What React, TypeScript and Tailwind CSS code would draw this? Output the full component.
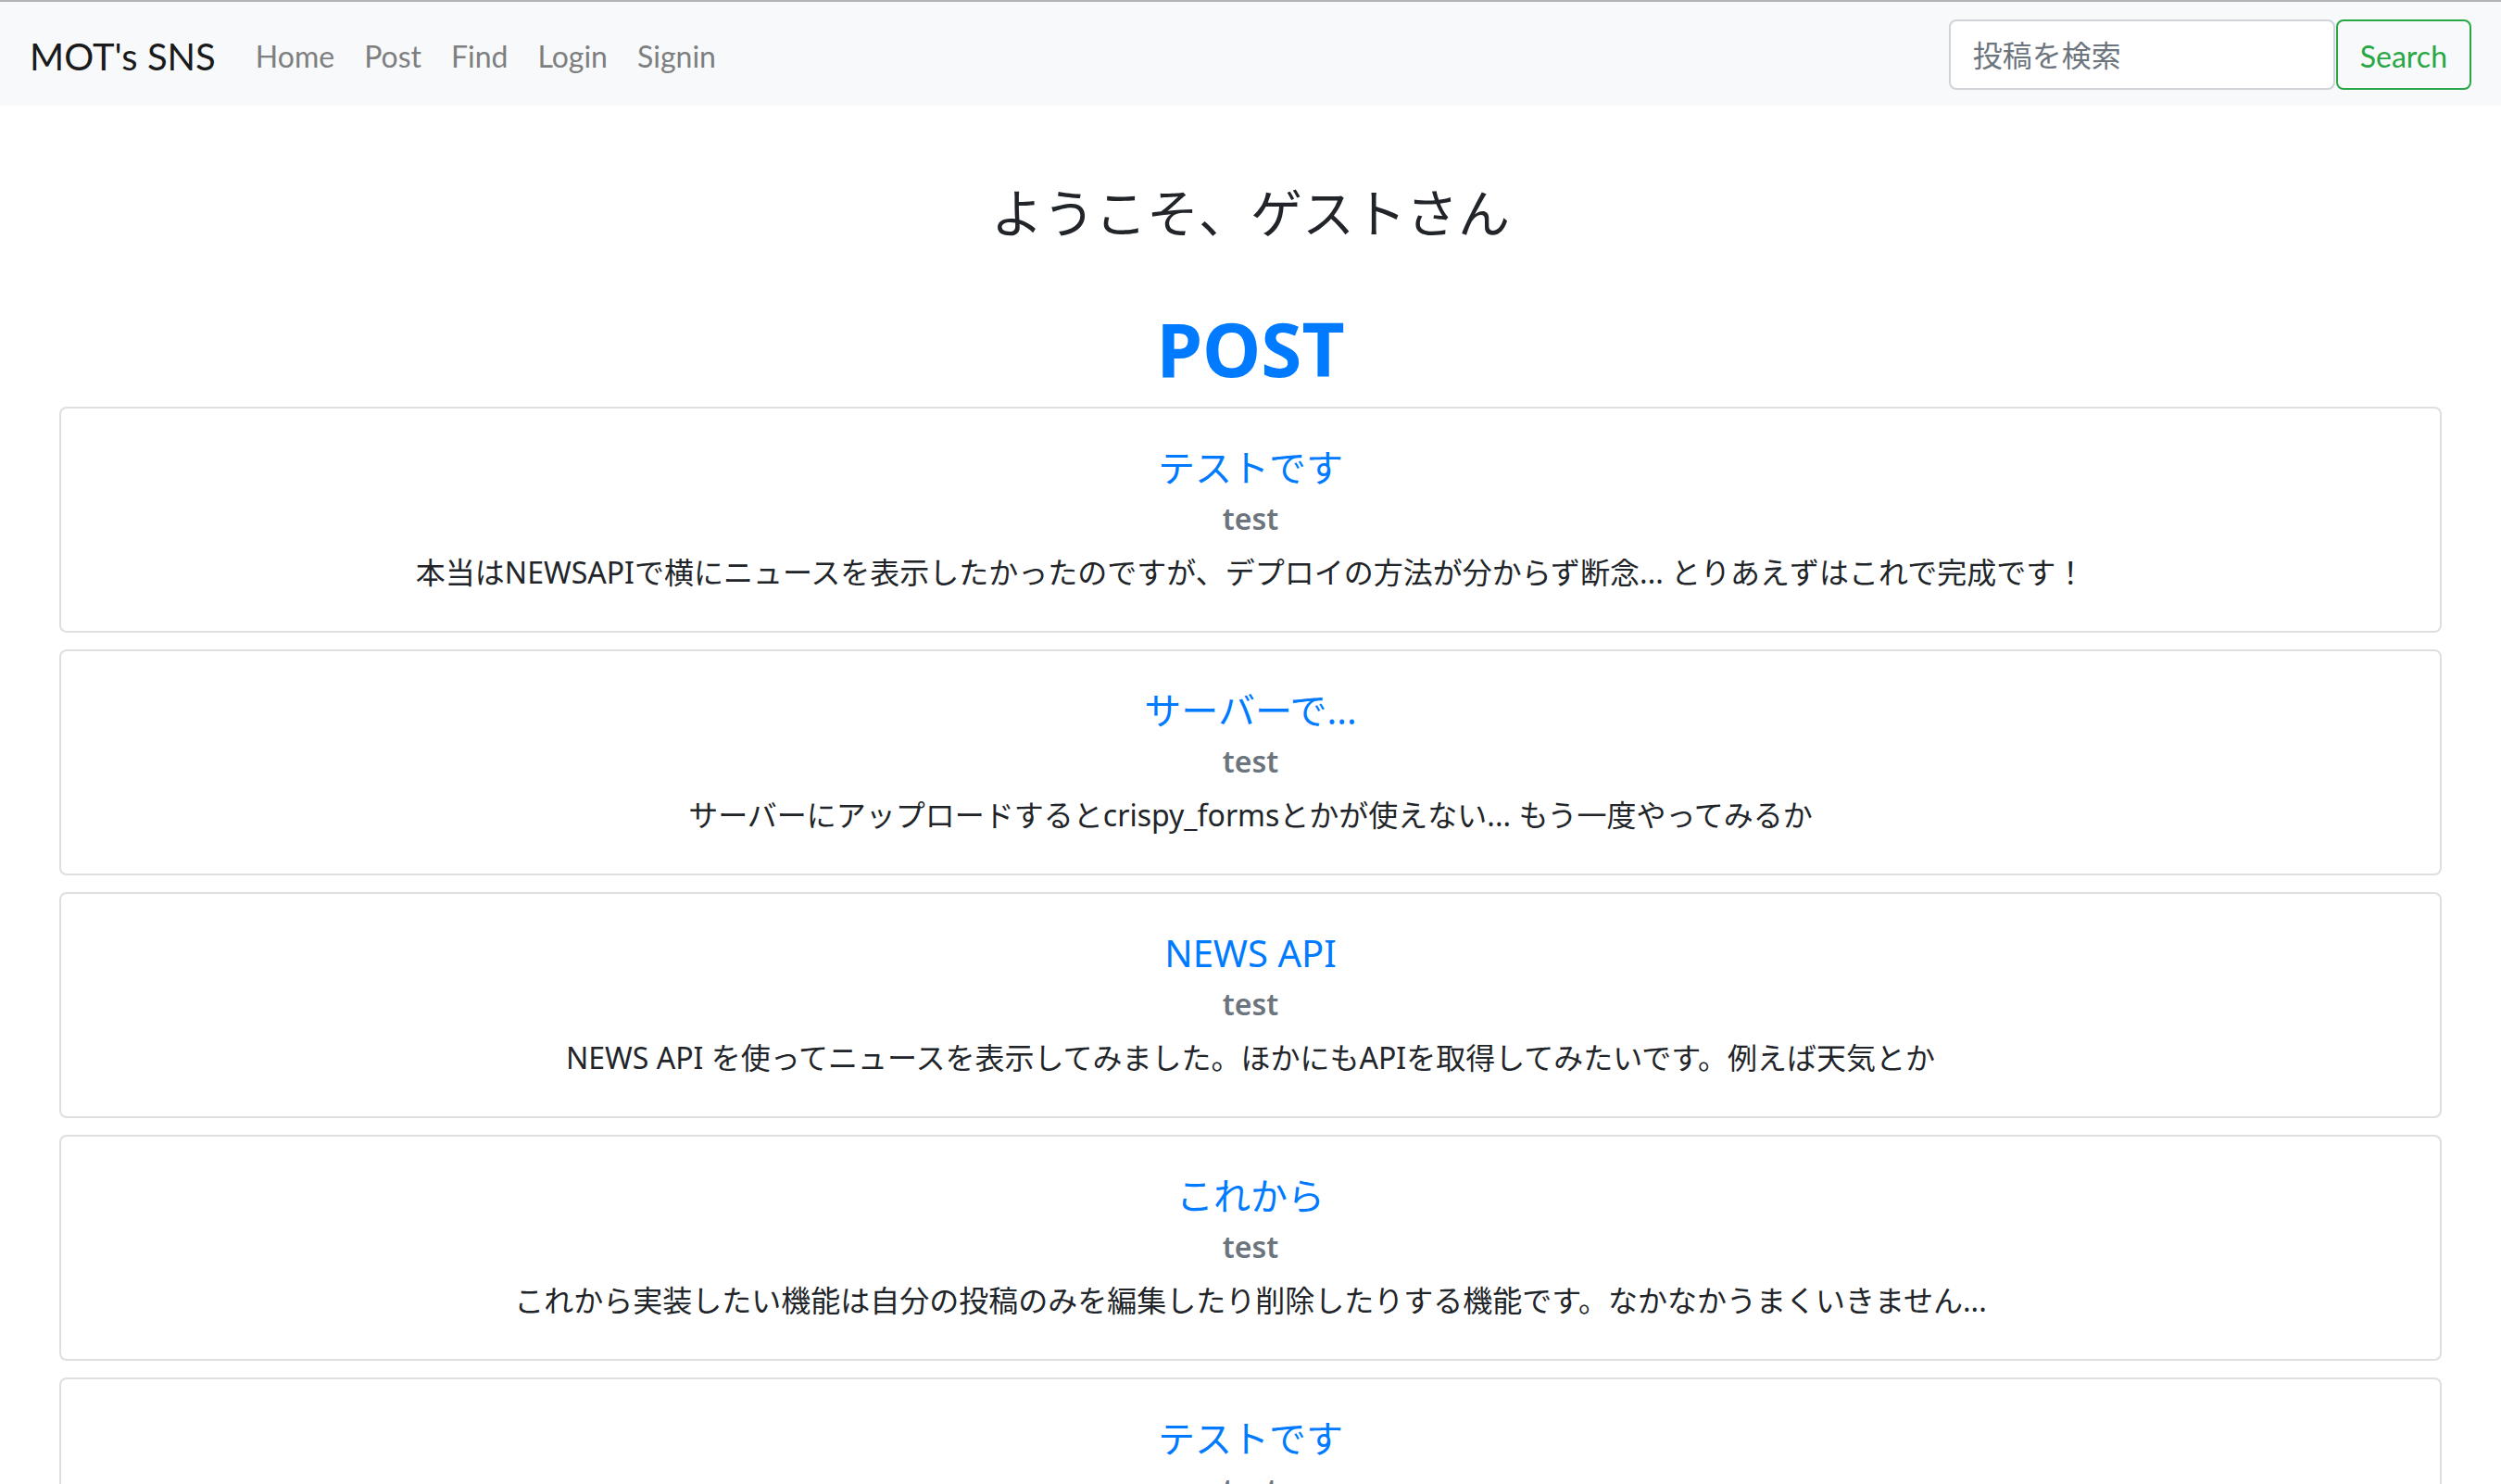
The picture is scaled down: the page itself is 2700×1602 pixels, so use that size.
import React from "react";

type Post = { title: string; body: string };

const posts: Post[] = [
  {
    title: "テストです",
    body: "本当はNEWSAPIで横にニュースを表示したかったのですが、デプロイの方法が分からず断念... とりあえずはこれで完成です！",
  },
  {
    title: "サーバーで...",
    body: "サーバーにアップロードするとcrispy_formsとかが使えない... もう一度やってみるか",
  },
  {
    title: "NEWS API",
    body: "NEWS API を使ってニュースを表示してみました。ほかにもAPIを取得してみたいです。例えば天気とか",
  },
  {
    title: "これから",
    body: "これから実装したい機能は自分の投稿のみを編集したり削除したりする機能です。なかなかうまくいきません...",
  },
  {
    title: "テストです",
    body: "本当はNEWSAPIで横にニュースを表示したかったのですが、デプロイの方法が分からず断念... とりあえずはこれで完成です！",
  },
];

function Card({ post }: { post: Post }) {
  return (
    <div className="border-2 border-[#dfdfdf] rounded-[8px] bg-white pt-[40px] pb-[39px] px-[40px] text-center">
      <a className="block text-[40px] leading-[48px] text-[#007bff]">{post.title}</a>
      <h6 className="mt-[11px] text-[32px] leading-[40px] font-semibold text-[#6c757d]">test</h6>
      <p className="mt-[14px] text-[32px] leading-[48px] text-[#212529]">{post.body}</p>
    </div>
  );
}

export default function App() {
  const links = ["Home", "Post", "Find", "Login", "Signin"];
  return (
    <div className="w-[2700px] h-[1602px] overflow-hidden bg-white font-['Noto_Sans','Noto_Sans_CJK_JP',sans-serif]">
      <div className="h-[2px] bg-[#b3b3b3]" />
      <nav className="h-[112px] bg-[#f8f9fa] flex items-center px-[32px] font-['Lato','Noto_Sans_CJK_JP',sans-serif]">
        <a className="pt-[6px] text-[40px] leading-[60px] text-[#1a1a1a] mr-[27px]">MOT's SNS</a>
        <ul className="flex items-center pt-[6px]">
          {links.map((l) => (
            <li key={l}>
              <a className="block px-[16px] py-[16px] text-[32px] leading-[48px] text-[#7e7f80]">{l}</a>
            </li>
          ))}
        </ul>
        <form className="ml-auto flex items-center gap-[1px] pt-[2px]" onSubmit={(e) => e.preventDefault()}>
          <input
            type="search"
            placeholder="投稿を検索"
            className="w-[417px] h-[76px] bg-white border-2 border-[#ced4da] rounded-[8px] px-[24px] text-[32px] text-[#495057] placeholder:text-[#6c757d] outline-none"
          />
          <button
            type="submit"
            className="h-[76px] px-[24px] pt-[4px] border-2 border-[#28a745] rounded-[8px] text-[32px] leading-[48px] text-[#28a745] bg-transparent"
          >
            Search
          </button>
        </form>
      </nav>
      <main className="px-[64px]">
        <h3 className="mt-[82px] text-center text-[56px] leading-[67px] font-normal text-[#212529]">
          ようこそ、ゲストさん
        </h3>
        <h1 className="mt-[65px] text-center text-[80px] leading-[96px] font-bold text-[#007bff]">POST</h1>
        <div className="mt-[15px] flex flex-col gap-[18px]">
          {posts.map((p, i) => (
            <Card key={i} post={p} />
          ))}
        </div>
      </main>
    </div>
  );
}
